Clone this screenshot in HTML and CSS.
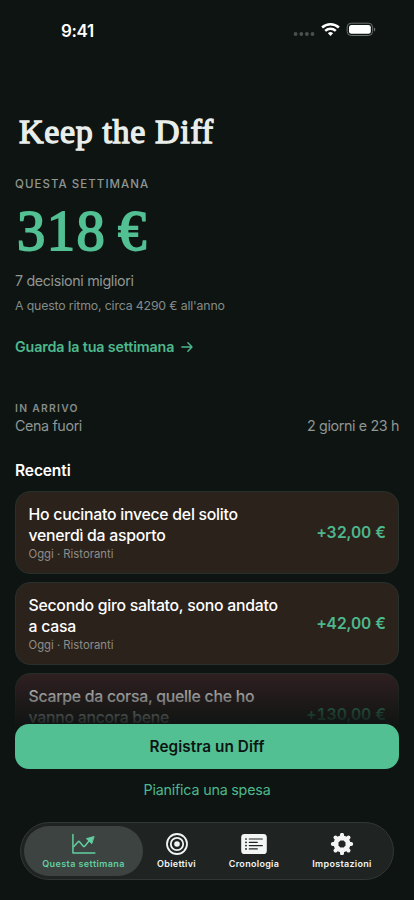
FILE: index.html
```html
<!DOCTYPE html>
<html lang="it">
<head>
<meta charset="utf-8">
<meta name="viewport" content="width=device-width, initial-scale=1">
<title>Keep the Diff</title>
<link rel="stylesheet" href="styles.css">
</head>
<body>
<div class="phone">
  <header class="status">
    <span class="time">9:41</span>
    <svg class="status-icons" width="84" height="16" viewBox="0 0 84 16">
      <g fill="#4b504e"><circle cx="3.6" cy="12" r="1.9"/><circle cx="9.3" cy="12" r="1.9"/><circle cx="14.9" cy="12" r="1.9"/><circle cx="20.5" cy="12" r="1.9"/></g>
      <g fill="none" stroke="#fff" stroke-width="2.5"><path d="M30.1 5.5a12.4 12.4 0 0 1 16.8 0"/><path d="M33.2 8.9a7.9 7.9 0 0 1 10.6 0"/></g>
      <path d="M38.5 13.9l-2.6-2.7a3.8 3.8 0 0 1 5.2 0z" fill="#fff"/>
      <rect x="55.2" y="1.2" width="25.4" height="12.3" rx="4" fill="none" stroke="#6d716f"/>
      <rect x="57" y="3" width="21.8" height="8.8" rx="2.5" fill="#fff"/>
      <path d="M82 5.4c1.7.5 1.7 3.5 0 4z" fill="#6d716f"/>
    </svg>
  </header>

  <main class="content">
    <h1 class="title">Keep the Diff</h1>
    <section class="summary">
      <div class="eyebrow">QUESTA SETTIMANA</div>
      <div class="total">318 €</div>
      <div class="decisions">7 decisioni migliori</div>
      <div class="pace">A questo ritmo, circa 4290 € all'anno</div>
      <a class="week-link"><span>Guarda la tua settimana</span>
        <svg width="12" height="12" viewBox="0 0 12 12" fill="none" stroke="currentColor" stroke-width="1.4" stroke-linecap="round" stroke-linejoin="round"><path d="M.8 6h10.2M6.9 1.8L11 6l-4.1 4.2"/></svg>
      </a>
    </section>
    <section class="upcoming">
      <div class="eyebrow small">IN ARRIVO</div>
      <div class="upcoming-row"><span>Cena fuori</span><span>2 giorni e 23 h</span></div>
    </section>
    <h2 class="section-title">Recenti</h2>
    <div class="cards">
      <article class="card">
        <div class="card-text"><div class="card-title">Ho cucinato invece del solito<br>venerdì da asporto</div><div class="meta">Oggi · Ristoranti</div></div>
        <div class="amount">+32,00 €</div>
      </article>
      <article class="card">
        <div class="card-text"><div class="card-title">Secondo giro saltato, sono andato<br>a casa</div><div class="meta">Oggi · Ristoranti</div></div>
        <div class="amount">+42,00 €</div>
      </article>
      <article class="card shopping">
        <div class="card-text"><div class="card-title">Scarpe da corsa, quelle che ho<br>vanno ancora bene</div><div class="meta">Ieri</div></div>
        <div class="amount">+130,00 €</div>
      </article>
    </div>
  </main>

  <footer class="dock">
    <button class="primary">Registra un Diff</button>
    <a class="secondary">Pianifica una spesa</a>
    <nav class="tabs">
      <a class="tab active">
        <svg width="24" height="22" viewBox="1 0 26 22" fill="none" stroke="currentColor" stroke-width="1.6" stroke-linecap="round" stroke-linejoin="round"><path d="M2 .6v20.2h23.8"/><path d="M3 13.8l4.7-5.3q.7-.7 1.4 0l4.2 4.9q.7.7 1.4 0l5-6"/><path d="M24.6 3l-8 2.2 5.6 5.2z" fill="currentColor" stroke-width="1"/></svg>
        <span>Questa settimana</span>
      </a>
      <a class="tab goals">
        <svg width="22" height="22" viewBox="0 0 22 22" fill="none" stroke="currentColor" stroke-width="1.8"><circle cx="11" cy="11" r="10"/><circle cx="11" cy="11" r="6.2"/><circle cx="11" cy="11" r="2.8" fill="currentColor" stroke="none"/></svg>
        <span>Obiettivi</span>
      </a>
      <a class="tab">
        <svg width="26" height="22" viewBox="0 0 26 22"><rect x=".2" y=".9" width="25.6" height="20.2" rx="3.4" fill="currentColor"/><g stroke="#1f2423" stroke-width="1.2" stroke-linecap="round"><path d="M8.3 6h13M8.3 9.3h8M8.3 12.6h13M8.3 15.9h8"/><path stroke-width="1.7" d="M4.9 6h.2M4.9 9.3h.2M4.9 12.6h.2M4.9 15.9h.2"/></g></svg>
        <span>Cronologia</span>
      </a>
      <a class="tab">
        <svg width="24" height="24" viewBox="-12 -12 24 24"><g stroke="currentColor" stroke-width="4.4" stroke-linecap="round"><path d="M0-10V-6M0 10V6M-10 0H-6M10 0H6"/><path d="M0-10V-6M0 10V6M-10 0H-6M10 0H6" transform="rotate(45)"/></g><circle r="6.7" fill="none" stroke="currentColor" stroke-width="5"/></svg>
        <span>Impostazioni</span>
      </a>
    </nav>
  </footer>
</div>
</body>
</html>
```
FILE: styles.css
```css
* { box-sizing: border-box; }
body { margin: 0; background: #0e1412; }
.phone {
  position: relative;
  width: 414px;
  height: 900px;
  overflow: hidden;
  background: #0e1412;
  color: #fff;
  font-family: Inter, "Liberation Sans", sans-serif;
  white-space: nowrap;
}
.status {
  height: 61px;
  padding: 0 38px 0 61px;
  display: flex;
  align-items: center;
  justify-content: space-between;
}
.time { font-size: 17px; font-weight: 600; letter-spacing: -0.4px; }
.status-icons { margin-top: -1px; }
.content { padding: 50px 15px 0; }
.title {
  margin: 0 0 24px 4px;
  font: 400 34px/42px "Liberation Serif", serif;
  -webkit-text-stroke: 1.3px currentColor;
  color: #e9eeeb;
  letter-spacing: 0.65px;
}
.eyebrow { font-size: 11.5px; line-height: 14px; font-weight: 500; letter-spacing: 1.05px; color: #8f9693; }
.eyebrow.small { font-size: 10.3px; font-weight: 600; letter-spacing: 1.3px; color: #858c89; }
.total {
  margin: 10px 0 11px 2px;
  font: 400 56.5px/60px "Liberation Serif", serif;
  -webkit-text-stroke: 1.8px currentColor;
  letter-spacing: 1.5px;
  word-spacing: -4px;
  color: #52c093;
}
.decisions { font-size: 14.3px; line-height: 18px; letter-spacing: -0.35px; color: #8f9693; }
.pace { margin-top: 8px; font-size: 12.3px; line-height: 16px; letter-spacing: -0.15px; color: #858b88; }
.week-link { display: flex; align-items: center; gap: 7px; margin-top: 24px; font-size: 14.3px; line-height: 18px; font-weight: 600; letter-spacing: -0.15px; color: #4db88c; }
.week-link svg { margin-top: -1px; }
.upcoming { margin-top: 45px; }
.upcoming-row { display: flex; justify-content: space-between; margin-top: 2px; font-size: 14.3px; line-height: 18px; letter-spacing: -0.37px; color: #8f9693; }
.section-title { margin: 26px 0 10px; font-size: 15.5px; line-height: 20px; font-weight: 600; letter-spacing: -0.1px; }
.cards { display: flex; flex-direction: column; gap: 8px; }
.card {
  display: flex;
  align-items: center;
  justify-content: space-between;
  height: 83px;
  padding: 1.5px 12px 0 12.5px;
  border: 1px solid #27302b;
  border-radius: 15px;
  background: #2b221b;
}
.card.shopping { background: #322022; }
.card-title { font-size: 15.8px; line-height: 20.7px; font-weight: 500; letter-spacing: -0.25px; }
.meta { margin-top: 1px; font-size: 11.3px; line-height: 14px; color: #8f8d89; }
.amount { font-size: 15.8px; line-height: 20px; font-weight: 600; letter-spacing: -0.1px; font-variant-numeric: tabular-nums; color: #4db88c; }
.dock {
  position: absolute;
  left: 0;
  right: 0;
  top: 669px;
  bottom: 0;
  padding: 55px 15px 0;
  display: flex;
  flex-direction: column;
  align-items: center;
  background: linear-gradient(rgba(14, 20, 18, 0) 0, #0e1412 59px);
}
.primary {
  width: 100%;
  height: 45px;
  padding: 0;
  border: 0;
  border-radius: 14px;
  background: #52c093;
  color: #0e1412;
  font: 600 15.3px/20px Inter, sans-serif;
  letter-spacing: 0.08px;
}
.secondary { margin-top: 12px; font-size: 14.3px; line-height: 18px; letter-spacing: -0.2px; color: #4db88c; }
.tabs {
  display: flex;
  width: 374px;
  height: 58px;
  margin-top: 23px;
  padding: 3px;
  border: 1px solid #303735;
  border-radius: 29px;
  background: #1f2423;
}
.tab {
  display: flex;
  flex-direction: column;
  align-items: center;
  width: 88px;
  height: 50px;
  padding-top: 7px;
  color: #f2f5f3;
  font-size: 9px;
  font-weight: 600;
  line-height: 12px;
  letter-spacing: 0.3px;
}
.tab svg { height: 22px; }
.tab span { margin-top: 3px; }
.tab.goals { width: 67px; }
.tab.active { width: 119px; border-radius: 25px; background: #3c4341; color: #62cfa1; letter-spacing: 0.42px; }
```
